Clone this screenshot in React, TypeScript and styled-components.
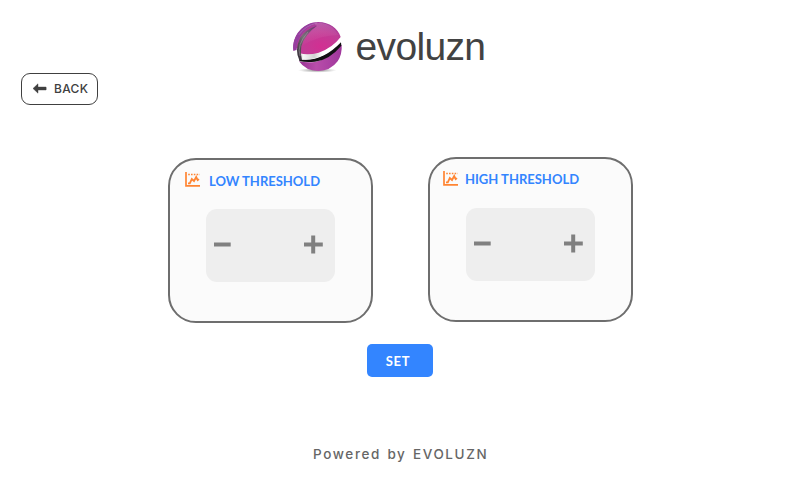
import React from "react";
import styled, { createGlobalStyle } from "styled-components";

const GlobalStyle = createGlobalStyle`
  * { box-sizing: border-box; }
  body { margin: 0; background: #fff; }
  button { margin: 0; padding: 0; font: inherit; cursor: pointer; }
`;

const Screen = styled.div`
  width: 800px;
  height: 480px;
  display: flex;
  flex-direction: column;
  background: #fff;
  overflow: hidden;
`;

const Header = styled.header`
  height: 73px;
  display: flex;
  padding: 20px 0 0 290px;
`;

const Wordmark = styled.div`
  margin: 4px 0 0 7.5px;
  color: #424242;
  font: 39px/46px "Liberation Sans", Arial, sans-serif;
  letter-spacing: -0.65px;
`;

const BackButton = styled.button`
  align-self: flex-start;
  width: 77px;
  height: 32px;
  margin-left: 21px;
  padding-left: 10px;
  display: flex;
  align-items: center;
  gap: 7px;
  flex-shrink: 0;
  background: #fff;
  border: 1px solid #404040;
  border-radius: 9px;
  color: #404040;
`;

const BackLabel = styled.span`
  font: 500 12px/16px Inter, sans-serif;
  letter-spacing: 0.3px;
`;

const Cards = styled.main`
  display: flex;
  gap: 55px;
  padding-left: 168px;
  margin-top: 52px;
  height: 166px;
`;

const Card = styled.section<{ $drop: number }>`
  width: 205px;
  height: 165px;
  margin-top: ${(p) => p.$drop}px;
  background: #fbfbfb;
  border: 2px solid #6e6e6e;
  border-radius: 28px;
`;

const CardTitle = styled.div<{ $left: number; $gap: number; $textTop: number }>`
  display: flex;
  height: 49px;
  padding: 12px 0 0 ${(p) => p.$left}px;
  gap: ${(p) => p.$gap}px;
  color: #3385ff;

  h2 {
    margin: ${(p) => p.$textTop}px 0 0;
    font: 700 13px/16px Lato, sans-serif;
    white-space: nowrap;
  }
`;

const Stepper = styled.div`
  width: 129px;
  height: 73px;
  margin-left: 36px;
  padding: 0 12px 3px 8px;
  display: flex;
  align-items: center;
  justify-content: space-between;
  background: #eee;
  border-radius: 11px;
`;

const StepButton = styled.button`
  display: flex;
  border: 0;
  background: transparent;
`;

const SetButton = styled.button`
  width: 66px;
  height: 33px;
  flex-shrink: 0;
  margin: 21px 0 0 367px;
  padding: 1px 4px 0 0;
  border: 0;
  border-radius: 5px;
  background: #3385ff;
  color: #fff;
  font: 700 13px/16px Lato, sans-serif;
  letter-spacing: 0.7px;
`;

const Footer = styled.footer`
  margin: 68px 0 0 313px;
  color: #666;
  font: 500 13.5px/19px Inter, sans-serif;
  letter-spacing: 1.62px;
  word-spacing: 1.2px;
  white-space: nowrap;
`;

const OrbLogo = () => (
  <svg width="58" height="54" viewBox="30 30 174 162">
    <defs>
      <radialGradient id="dome" cx="0.58" cy="0.75" r="0.75">
        <stop offset="0" stopColor="#d22f92" />
        <stop offset="0.6" stopColor="#c03d96" />
        <stop offset="1" stopColor="#a03c9b" />
      </radialGradient>
      <linearGradient id="gloss" x1="0" y1="0" x2="0.2" y2="1">
        <stop offset="0" stopColor="#e8a4d2" stopOpacity="0.35" />
        <stop offset="1" stopColor="#d66aae" stopOpacity="0.05" />
      </linearGradient>
      <linearGradient id="base" x1="0" y1="0" x2="1" y2="0">
        <stop offset="0" stopColor="#983294" />
        <stop offset="0.4" stopColor="#b84daa" />
        <stop offset="1" stopColor="#a0379c" />
      </linearGradient>
      <linearGradient id="band" x1="0" y1="0" x2="1" y2="0">
        <stop offset="0" stopColor="#d8d8d8" />
        <stop offset="0.1" stopColor="#f6f6f6" />
        <stop offset="0.36" stopColor="#d2d2d2" />
        <stop offset="0.55" stopColor="#fff" />
      </linearGradient>
      <linearGradient id="edge" x1="0" y1="1" x2="1" y2="0">
        <stop offset="0" stopColor="#302832" />
        <stop offset="0.5" stopColor="#777077" />
        <stop offset="1" stopColor="#6b3070" />
      </linearGradient>
      <radialGradient id="shade">
        <stop offset="0" stopColor="#555" stopOpacity="0.7" />
        <stop offset="1" stopColor="#777" stopOpacity="0" />
      </radialGradient>
    </defs>
    <ellipse cx="112" cy="181" rx="58" ry="7" fill="url(#shade)" />
    <path d="M57 154Q77 158 105 156Q147 146 185 104Q187 132 173 154Q151 183 115 183Q77 183 57 154Z" fill="url(#base)" />
    <path d="M58 148Q125 158 183 97L184 107Q148 150 105 155Q77 158 58 153Z" fill="#120f13" />
    <path d="M58 129Q125 138 182 86L178 97L162 107L158 115Q125 150 62 149Z" fill="url(#band)" />
    <path d="M41 123C34 77 73 36 115 36C148 37 174 54 182 81Q157 114 116 128Q85 136 59 130L52 113Z" fill="url(#dome)" />
    <path d="M67 87Q82 60 111 47Q94 38 121 38Q158 42 175 75Q122 75 67 106Z" fill="url(#gloss)" />
    <path d="M40 122C35 75 71 38 108 38Q62 58 50 107L50 120Z" fill="#963f9f" />
    <path d="M57 74Q76 47 111 39" fill="none" stroke="#c78bc9" strokeWidth="3" opacity="0.45" />
    <path d="M58 151Q43 120 60 84Q75 58 111 47Q73 74 64 109Q60 130 66 150Z" fill="url(#edge)" />
    <path d="M60 138Q49 105 84 66" fill="none" stroke="#aaa4aa" strokeWidth="1.5" />
  </svg>
);

const ArrowLeft = () => (
  <svg width="15" height="12" viewBox="0 0 15 12">
    <path d="M1 5.5 6 0.8v3.2h7.7q0.5 0 0.5 0.5v2q0 0.5-0.5 0.5H6v3.2Z" fill="#404040" stroke="#404040" strokeWidth="0.4" strokeLinejoin="round" />
  </svg>
);

const ChartIcon = () => (
  <svg width="16" height="16" viewBox="0 0 16 16" fill="none" stroke="#ff8533">
    <path d="M1 0v13.9h14" strokeWidth="1.7" />
    <path d="M3 11.3h1.8l2-4.3 2.2 2 2.2-4 1.5 3.1 1.3-1" strokeWidth="1.8" />
    <path d="M3.2 2.5h11.5" strokeWidth="1.6" strokeDasharray="1.6 1.2" />
  </svg>
);

const Minus = () => (
  <svg width="17" height="20" viewBox="0 0 17 20">
    <path d="M0 8.5h16.7v4H0z" fill="#808080" />
  </svg>
);

const Plus = () => (
  <svg width="19" height="20" viewBox="0 0 19 20">
    <path d="M7.2 1.6h4v6.9h7.6v4h-7.6v6.9h-4v-6.9H0v-4h7.2z" fill="#808080" />
  </svg>
);

interface ThresholdProps {
  title: string;
  drop: number;
  left: number;
  gap: number;
  textTop: number;
}

const Threshold = ({ title, drop, left, gap, textTop }: ThresholdProps) => (
  <Card $drop={drop}>
    <CardTitle $left={left} $gap={gap} $textTop={textTop}>
      <ChartIcon />
      <h2>{title}</h2>
    </CardTitle>
    <Stepper>
      <StepButton aria-label="Decrease"><Minus /></StepButton>
      <StepButton aria-label="Increase"><Plus /></StepButton>
    </Stepper>
  </Card>
);

export default function App() {
  return (
    <Screen>
      <GlobalStyle />
      <Header>
        <OrbLogo />
        <Wordmark>evoluzn</Wordmark>
      </Header>
      <BackButton>
        <ArrowLeft />
        <BackLabel>BACK</BackLabel>
      </BackButton>
      <Cards>
        <Threshold title="LOW THRESHOLD" drop={1} left={15} gap={8} textTop={1} />
        <Threshold title="HIGH THRESHOLD" drop={0} left={13} gap={6} textTop={0} />
      </Cards>
      <SetButton>SET</SetButton>
      <Footer>Powered by EVOLUZN</Footer>
    </Screen>
  );
}
